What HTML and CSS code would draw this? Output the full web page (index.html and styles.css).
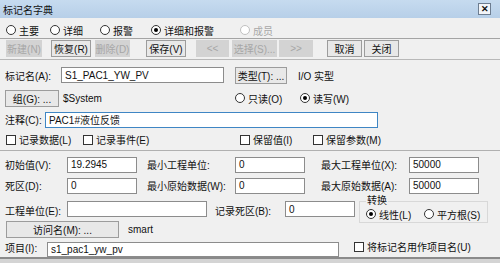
FILE: index.html
```html
<!DOCTYPE html>
<html lang="zh-CN">
<head>
  <meta charset="UTF-8">
  <title>标记名字典</title>
  <link rel="stylesheet" href="styles.css">
</head>
<body>
  <div class="dlg">
    <div class="title">
      <span>标记名字典</span>
      <span class="close">✕</span>
    </div>

    <div class="row tabs">
      <div class="tab t1"><span class="radio"></span>主要</div>
      <div class="tab t2"><span class="radio"></span>详细</div>
      <div class="tab t3"><span class="radio"></span>报警</div>
      <div class="tab t4"><span class="radio on"></span>详细和报警</div>
      <div class="tab off"><span class="radio"></span>成员</div>
    </div>

    <div class="row toolbar">
      <div class="btn dis b-new">新建(N)</div>
      <div class="btn b-restore">恢复(R)</div>
      <div class="btn dis b-del">删除(D)</div>
      <div class="btn b-save">保存(V)</div>
      <div class="btn dis b-prev">&lt;&lt;</div>
      <div class="btn dis b-pick">选择(S)...</div>
      <div class="btn dis b-next">&gt;&gt;</div>
      <div class="btn b-cancel">取消</div>
      <div class="btn b-close">关闭</div>
    </div>

    <div class="row r-name">
      <span class="lab w56">标记名(A):</span>
      <div class="field f-name">S1_PAC1_YW_PV</div>
      <div class="btn b-type">类型(T): ...</div>
      <span class="type-txt">I/O 实型</span>
    </div>

    <div class="row r-group">
      <div class="btn b-group">组(G): ...</div>
      <span class="sys">$System</span>
      <div class="tab t-ro"><span class="radio"></span>只读(O)</div>
      <div class="tab"><span class="radio on"></span>读写(W)</div>
    </div>

    <div class="row r-comment">
      <span class="lab w40">注释(C):</span>
      <div class="field focus f-comment">PAC1#液位反馈</div>
    </div>

    <div class="row r-checks">
      <div class="tab c1"><span class="check"></span>记录数据(L)</div>
      <div class="tab c2"><span class="check"></span>记录事件(E)</div>
      <div class="tab c3"><span class="check"></span>保留值(I)</div>
      <div class="tab"><span class="check"></span>保留参数(M)</div>
    </div>

    <div class="sep"></div>

    <div class="row r-field first">
      <span class="lab w62">初始值(V):</span>
      <div class="field f-num">19.2945</div>
      <span class="lab w98">最小工程单位:</span>
      <div class="field f-num">0</div>
      <span class="lab w104">最大工程单位(X):</span>
      <div class="field f-num">50000</div>
    </div>

    <div class="row r-field">
      <span class="lab w62">死区(D):</span>
      <div class="field f-num">0</div>
      <span class="lab w98">最小原始数据(W):</span>
      <div class="field f-num">0</div>
      <span class="lab w104">最大原始数据(A):</span>
      <div class="field f-num">50000</div>
    </div>

    <div class="row r-unit">
      <span class="lab w62">工程单位(E):</span>
      <div class="field f-unit"></div>
      <span class="lab w78">记录死区(B):</span>
      <div class="field f-num">0</div>
      <fieldset class="conv">
        <legend>转换</legend>
        <div class="tab t-lin"><span class="radio on"></span>线性(L)</div>
        <div class="tab"><span class="radio"></span>平方根(S)</div>
      </fieldset>
    </div>

    <div class="row r-access">
      <div class="btn b-access">访问名(M): ...</div>
      <span class="smart">smart</span>
    </div>

    <div class="row r-item">
      <span class="lab w42">项目(I):</span>
      <div class="field f-item">s1_pac1_yw_pv</div>
      <div class="tab c-use"><span class="check"></span>将标记名用作项目名(U)</div>
    </div>

    <div class="bottom"></div>
  </div>
</body>
</html>
```

FILE: styles.css
```css
body {
  margin: 0;
  background: #fff;
  font-family: "Liberation Sans", "Noto Sans CJK SC", sans-serif;
  font-size: 10px;
  color: #111;
}
.dlg {
  position: relative;
  width: 500px;
  height: 263px;
  background: #f0f0f0;
  overflow: hidden;
}
.title {
  height: 18px;
  box-sizing: border-box;
  display: flex;
  align-items: center;
  justify-content: space-between;
  padding: 0 9px 0 3px;
  background: linear-gradient(#c6dbef, #b7cfe8);
}
.close {
  width: 13px;
  height: 12px;
  box-sizing: border-box;
  border: 1px solid #6d7d90;
  background: #f3f5f8;
  font-size: 9px;
  font-weight: bold;
  line-height: 10px;
  text-align: center;
}

.row {
  display: flex;
  align-items: center;
  box-sizing: border-box;
  white-space: nowrap;
}
.tab {
  display: flex;
  align-items: center;
  gap: 3px;
}
.radio, .check {
  width: 10px;
  height: 10px;
  box-sizing: border-box;
  border: 1px solid #333;
  background: #fff;
  flex: none;
}
.radio {
  border-radius: 50%;
  display: flex;
  align-items: center;
  justify-content: center;
}
.radio.on::after {
  content: "";
  width: 4px;
  height: 4px;
  border-radius: 50%;
  background: #000;
}
.off {
  color: #a8a8a8;
}
.off .radio {
  border-color: #c0c0c0;
}

/* tabs */
.tabs {
  height: 20px;
  padding: 4px 0 0 6px;
}
.t1 { width: 44px; }
.t2 { width: 50px; }
.t3 { width: 51px; }
.t4 { width: 89px; }

/* buttons */
.btn {
  height: 17px;
  box-sizing: border-box;
  border: 1px solid #9c9c9c;
  background: #e8e8e8;
  display: flex;
  align-items: center;
  justify-content: center;
  flex: none;
}
.btn.dis {
  border-color: #d3d3d3;
  background: #d3d3d3;
  color: #a6a6a6;
}
.toolbar {
  height: 22px;
  border-top: 1px solid #a4a4a4;
  border-bottom: 1px solid #b8b8b8;
  padding: 1px 0 0 6px;
  align-items: flex-start;
}
.b-new { width: 36px; }
.b-restore { width: 40px; margin-left: 9px; }
.b-del { width: 35px; margin-left: 4px; }
.b-save { width: 40px; margin-left: 16px; }
.b-prev { width: 33px; margin-left: 10px; }
.b-pick { width: 45px; margin-left: 3px; }
.b-next { width: 34px; margin-left: 2px; }
.b-cancel { width: 35px; margin-left: 14px; }
.b-close { width: 35px; margin-left: 2px; }

/* fields */
.field {
  height: 16px;
  box-sizing: border-box;
  border: 1px solid #8c8c8c;
  background: #fff;
  padding: 0 3px;
  display: flex;
  align-items: center;
  overflow: hidden;
  flex: none;
}
.field.focus {
  border-color: #3f86c4;
}
.lab {
  flex: none;
}
.w40 { width: 40px; }
.w42 { width: 42px; }
.w56 { width: 56px; }
.w62 { width: 62px; }
.w78 { width: 78px; padding-left: 8px; box-sizing: border-box; }
.w98 { width: 98px; padding-left: 10px; box-sizing: border-box; }
.w104 { width: 104px; padding-left: 16px; box-sizing: border-box; }

.r-name {
  height: 30px;
  padding-left: 5px;
}
.f-name { width: 163px; }
.b-type { width: 52px; margin-left: 11px; }
.type-txt { margin-left: 11px; }

.r-group {
  height: 16px;
  padding-left: 5px;
}
.b-group { width: 54px; }
.sys { width: 172px; margin-left: 4px; }
.t-ro { width: 65px; }

.r-comment {
  height: 27px;
  padding-left: 5px;
}
.f-comment { width: 333px; }

.r-checks {
  height: 13px;
  padding-left: 6px;
}
.c1 { width: 77px; }
.c2 { width: 157px; }
.c3 { width: 73px; }

.sep {
  height: 1px;
  margin-top: 4px;
  background: #b0b0b0;
}

.r-field {
  height: 21px;
  padding-left: 5px;
}
.r-field.first {
  margin-top: 3px;
}
.f-num { width: 70px; }

.r-unit {
  height: 25px;
  padding-left: 5px;
  align-items: flex-start;
}
.r-unit .lab {
  margin-top: 7px;
}
.r-unit .field {
  margin-top: 5px;
}
.f-unit { width: 140px; }
.conv {
  margin: 0 0 0 4px;
  padding: 0 0 0 6px;
  width: 129px;
  height: 27px;
  box-sizing: border-box;
  border: 1px solid #d8d8d8;
  display: flex;
  align-items: center;
}
.conv legend {
  padding: 0 1px;
  margin-left: 0;
  line-height: 10px;
}
.t-lin { width: 58px; }

.r-access {
  height: 17px;
  padding-left: 6px;
}
.b-access { width: 113px; }
.smart { margin-left: 9px; }

.r-item {
  height: 19px;
  padding-left: 5px;
  align-items: flex-end;
}
.r-item .lab {
  margin-bottom: 2px;
}
.f-item { width: 292px; height: 15px; }
.c-use {
  margin-left: 15px;
  margin-bottom: 3px;
}

.bottom {
  position: absolute;
  left: 0;
  right: 0;
  bottom: 0;
  height: 6px;
  border-top: 2px solid #8a8a8a;
  background: #d4d4d4;
  box-sizing: border-box;
}
```
